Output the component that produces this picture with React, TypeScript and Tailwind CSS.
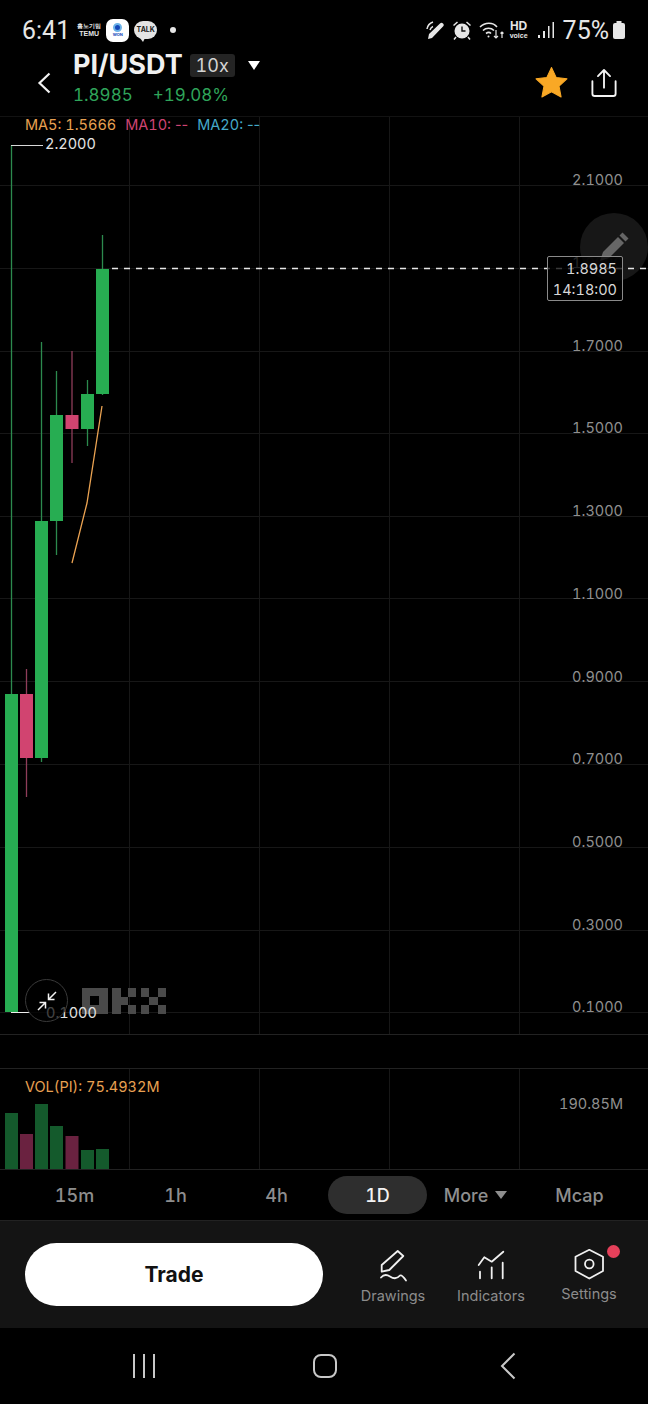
const FONT = "font-['Inter','Liberation_Sans',sans-serif] tabular-nums";

const verticals = [129, 259, 389, 519];
const horizontals = [185, 268, 351, 433, 516, 598, 681, 764, 847, 930, 1012];

const candles = [
  { x: 5, top: 694, bottom: 1012, wickTop: 145, wickBottom: 1012, up: true },
  { x: 20, top: 694, bottom: 758, wickTop: 669, wickBottom: 797, up: false },
  { x: 35, top: 521, bottom: 758, wickTop: 342, wickBottom: 762, up: true },
  { x: 50, top: 415, bottom: 521, wickTop: 371, wickBottom: 555, up: true },
  { x: 65.5, top: 415, bottom: 429, wickTop: 351, wickBottom: 463, up: false },
  { x: 81, top: 394, bottom: 429, wickTop: 380, wickBottom: 446, up: true },
  { x: 96, top: 269, bottom: 394, wickTop: 235, wickBottom: 395, up: true },
];

const volumes = [
  { x: 5, top: 1113, up: true },
  { x: 20, top: 1134, up: false },
  { x: 35, top: 1104, up: true },
  { x: 50, top: 1126, up: true },
  { x: 65.5, top: 1136, up: false },
  { x: 81, top: 1150, up: true },
  { x: 96, top: 1149, up: true },
];

const priceLabels = [
  { label: '2.1000', y: 180 },
  { label: '1.9000', y: 263 },
  { label: '1.7000', y: 346 },
  { label: '1.5000', y: 428 },
  { label: '1.3000', y: 511 },
  { label: '1.1000', y: 594 },
  { label: '0.9000', y: 677 },
  { label: '0.7000', y: 759 },
  { label: '0.5000', y: 842 },
  { label: '0.3000', y: 925 },
  { label: '0.1000', y: 1007 },
];

// chart pane, coordinates follow the page so they are easy to read off the picture
function PriceChart() {
  return (
    <div className="relative h-[919px] border-b border-[#222222]">
      <svg viewBox="0 116 648 918" className="absolute left-0 top-0 h-[918px] w-[648px]">
        {verticals.map((x) => (
          <line key={x} x1={x + 0.5} x2={x + 0.5} y1={116} y2={1034} stroke="#171717" />
        ))}
        {horizontals.map((y) => (
          <line key={y} x1={0} x2={648} y1={y + 0.5} y2={y + 0.5} stroke="#171717" />
        ))}
        <line x1={0} x2={648} y1={116.5} y2={116.5} stroke="#121212" />
        {candles.map((c) => (
          <g key={c.x}>
            <line
              x1={c.x + 6.5}
              x2={c.x + 6.5}
              y1={c.wickTop}
              y2={c.wickBottom}
              stroke={c.up ? '#2c8a4e' : '#8f3d5a'}
              strokeWidth={1.3}
            />
            <rect
              x={c.x}
              y={c.top}
              width={13}
              height={c.bottom - c.top}
              fill={c.up ? '#27ad52' : '#d14470'}
            />
          </g>
        ))}
        <polyline points="72,563 87,503 102,406" fill="none" stroke="#eba352" strokeWidth={1.3} />
        <line x1={11} x2={43} y1={145.5} y2={145.5} stroke="#d8d8d8" />
        <line x1={11} x2={30} y1={1012.5} y2={1012.5} stroke="#eeeeee" />
        {/* OKX watermark */}
        <g fill="#4a4a4a">
          <path d="M82 988h26v26h-26z M90 996v9h9v-9z" fillRule="evenodd" />
          <path d="M112 988h9v9h-9z M112 997h9v8h-9z M112 1005h9v9h-9z M121 997h7v8h-7z M128 988h8v9h-8z M128 1005h8v9h-8z" />
          <path d="M141 988h8v9h-8z M141 1005h8v9h-8z M149 997h9v8h-9z M158 988h8v9h-8z M158 1005h8v9h-8z" />
        </g>
      </svg>

      <div className="absolute left-[25px] top-0 flex gap-[9px] text-[14.500px] leading-[17px]">
        <span className="text-[#e8a052]">MA5: 1.5666</span>
        <span className="text-[#cf4472]">MA10: <span className="normal-nums">--</span></span>
        <span className="text-[#45a9c9]">MA20: <span className="normal-nums">--</span></span>
      </div>
      <span className="absolute left-[45px] top-[19px] text-[14.500px] leading-[18px] text-[#e4e4e4]">2.2000</span>
      <span className="absolute left-[46px] top-[888px] text-[14.500px] leading-[18px] text-[#e0e0e0]">0.1000</span>

      {priceLabels.map((p) => (
        <span
          key={p.label}
          className="absolute right-[25px] text-[14.500px] leading-[18px] text-[#8f8f8f]"
          style={{ top: p.y - 125 }}
        >
          {p.label}
        </span>
      ))}

      {/* floating draw button under the price tag */}
      <div className="absolute left-[580px] top-[97px] flex h-[68px] w-[68px] items-center justify-center rounded-full bg-[#1a1a1a]/90">
        <svg viewBox="0 0 40 40" className="ml-[4px] h-10 w-10" fill="#666666">
          <path d="M4 34l3-9 15-15 6 6-15 15z" />
          <path d="M23.500 8.500l3-3 6 6-3 3z" />
        </svg>
      </div>

      <svg viewBox="112 260 536 16" className="absolute left-[112px] top-[144px] h-[16px] w-[536px]">
        <line x1={112} x2={648} y1={268.5} y2={268.5} stroke="#e6e6e6" strokeWidth={1.4} strokeDasharray="6 6" />
      </svg>

      <div className="absolute left-[547px] top-[140px] flex h-[45px] w-[76px] flex-col items-end justify-center rounded-[2px] border border-[#8a8a8a] bg-black/75 pr-[5px] text-[14.500px] leading-[21px] text-[#d8d8d8]">
        <span>1.8985</span>
        <span>14:18:00</span>
      </div>

      {/* collapse button */}
      <div className="absolute left-[25px] top-[863px] flex h-[43px] w-[43px] items-center justify-center rounded-full border border-[#3a3a3a] bg-black/70">
        <svg viewBox="0 0 24 24" className="h-[24px] w-[24px]" fill="none" stroke="#f2f2f2" strokeWidth={1.5}>
          <path d="M21 3l-7.500 7.500M13.500 4.500v6h6" />
          <path d="M3 21l7.500-7.500M4.500 13.500h6v6" />
        </svg>
      </div>
    </div>
  );
}

function VolumeChart() {
  return (
    <div className="relative h-[102px] border-y border-[#222222]">
      <svg viewBox="0 1069 648 100" className="absolute left-0 top-0 h-[100px] w-[648px]">
        {verticals.map((x) => (
          <line key={x} x1={x + 0.5} x2={x + 0.5} y1={1069} y2={1169} stroke="#171717" />
        ))}
        {volumes.map((v) => (
          <rect
            key={v.x}
            x={v.x}
            y={v.top}
            width={13}
            height={1169 - v.top}
            fill={v.up ? '#145a2c' : '#6a2240'}
          />
        ))}
      </svg>
      <span className="absolute left-[25px] top-[9px] text-[14.500px] leading-[18px] text-[#e8a052]">VOL(PI): 75.4932M</span>
      <span className="absolute right-[25px] top-[26px] text-[14.500px] leading-[18px] text-[#8f8f8f]">190.85M</span>
    </div>
  );
}

function StatusBar() {
  return (
    <div className="flex h-[47px] items-center justify-between pl-[22px] pr-[22px] pt-[13px] text-[#e6e6e6]">
      <div className="flex items-center">
        <span className="font-['Roboto',sans-serif] text-[25px] leading-none">6:41</span>
        <div className="ml-[7px] flex w-[24px] flex-col items-center font-['Liberation_Sans',sans-serif] text-[7px] font-bold leading-[7px]">
          <span className="text-[6px]">홈노기밈</span>
          <span>TEMU</span>
        </div>
        <div className="ml-[5px] flex h-[23px] w-[23px] flex-col items-center justify-center rounded-[7px] bg-white">
          <span className="h-[9px] w-[9px] rounded-full border-2 border-[#6db3e8] bg-[#1447b8]" />
          <span className="text-[4px] font-bold leading-[6px] text-[#1447b8]">WON</span>
        </div>
        <div className="relative ml-[5px] flex h-[18px] w-[23px] items-center justify-center rounded-full bg-[#e4e4e4] text-[7px] font-bold text-[#222]">
          TALK
          <span className="absolute bottom-[-3px] left-[6px] h-0 w-0 border-l-[3px] border-r-[2px] border-t-[4px] border-x-transparent border-t-[#e4e4e4]" />
        </div>
        <span className="ml-[13px] h-[6px] w-[6px] rounded-full bg-[#e6e6e6]" />
      </div>
      <div className="flex items-center">
        <svg viewBox="0 0 20 20" className="h-[20px] w-[20px]" fill="none" stroke="#e6e6e6" strokeWidth={1.5}>
          <path d="M2 19l1-5L14 3.500c1-1 2-1 3 0s1 2 0 3L6 18z" fill="#e6e6e6" stroke="none" />
          <path d="M1 9c.5-3 3-6 6-7M4 10c.5-1.500 1.500-3 3-3.500" />
        </svg>
        <svg viewBox="0 0 20 20" className="ml-[6px] h-[20px] w-[20px]" fill="#e6e6e6">
          <circle cx="10" cy="11" r="7.500" />
          <path d="M1 5l4-3.500 1 1-4 3.500zM19 5l-4-3.500-1 1 4 3.500z" />
          <path d="M4 17l-2 2.500M16 17l2 2.500" stroke="#e6e6e6" strokeWidth="1.500" />
          <path d="M10 6.500V11h3.500" fill="none" stroke="#111" strokeWidth="1.400" />
        </svg>
        <svg viewBox="0 0 26 20" className="ml-[7px] h-[20px] w-[26px]" fill="none" stroke="#e6e6e6" strokeWidth={1.6}>
          <path d="M1 7c5-5 13-5 17 0M4 10.500c3-3 8-3 11 0M7 13.500c2-1.500 3.500-1.500 5 0" />
          <circle cx="9.500" cy="16.500" r="1" fill="#e6e6e6" stroke="none" />
          <path d="M17 10v8M15 16l2 2 2-2M23 18v-6M21.500 13.500l1.500-1.500 1.500 1.500" strokeWidth={1.2} />
        </svg>
        <div className="ml-[4px] flex w-[20px] flex-col items-center font-['Liberation_Sans',sans-serif] font-bold">
          <span className="text-[12px] leading-[11px]">HD</span>
          <span className="text-[7px] leading-[7px]">voice</span>
        </div>
        <svg viewBox="0 0 18 20" className="ml-[8px] h-[20px] w-[18px]" fill="#e6e6e6">
          <path d="M1 15h2v3H1zM6 11h2v7H6zM11 6h1.500v12H11zM15.500 2H17v16h-1.500z" />
        </svg>
        <span className="ml-[8px] font-['Roboto',sans-serif] text-[25px] leading-none">75%</span>
        <svg viewBox="0 0 14 20" className="ml-[3px] h-[20px] w-[14px]" fill="#e6e6e6">
          <path d="M4.500 1h5v2h-5z" />
          <rect x="1" y="3" width="12" height="16" rx="2" />
        </svg>
      </div>
    </div>
  );
}

function Header() {
  return (
    <div className="relative flex h-[69px] items-start">
      <svg viewBox="0 0 14 22" className="ml-[37px] mt-[25px] h-[22px] w-[14px]" fill="none" stroke="#f2f2f2" strokeWidth={2.2}>
        <path d="M12.500 1.500L2.500 11l10 9.500" />
      </svg>
      <div className="ml-[22px] flex flex-col">
        <div className="flex items-center">
          <span className="text-[27px] font-bold leading-[36px] text-[#f0f0f0]">PI/USDT</span>
          <span className="ml-[7px] flex h-[23px] w-[45px] items-center justify-center rounded-[3px] bg-[#242424] text-[18px] text-[#d4d4d4]">10x</span>
          <span className="ml-[13px] h-0 w-0 border-x-[6.500px] border-t-[9px] border-x-transparent border-t-white" />
        </div>
        <div className="flex gap-[20px] text-[17px] leading-[25px] text-[#2fa45a]">
          <span>1.8985</span>
          <span>+19.08%</span>
        </div>
      </div>
      <div className="ml-auto mr-[31px] mt-[19px] flex items-center gap-[23px]">
        <svg viewBox="0 0 32 32" className="h-[33px] w-[33px]" fill="#f9a825">
          <path d="M16 1.500l4.500 9.600 10.500 1.300-7.700 7.200 2 10.400-9.300-5.100-9.300 5.100 2-10.400L1 12.400l10.500-1.300z" stroke="#f9a825" strokeLinejoin="round" />
        </svg>
        <svg viewBox="0 0 28 32" className="h-[32px] w-[26px]" fill="none" stroke="#f4f4f4" strokeWidth={2} strokeLinecap="round" strokeLinejoin="round">
          <path d="M14 21V2M7.500 8.500L14 2l6.500 6.500" />
          <path d="M1.500 14v13.500a2.500 2.500 0 002.500 2.500h20a2.500 2.500 0 002.500-2.500V14" />
        </svg>
      </div>
    </div>
  );
}

function Timeframes() {
  return (
    <div className="grid h-[50px] grid-cols-6 items-center pl-[24px] pr-[18px] text-[18px] font-medium text-[#8e8e8e]">
      <span className="text-center">15m</span>
      <span className="text-center">1h</span>
      <span className="text-center">4h</span>
      <span className="mx-[1px] flex h-[38px] items-center justify-center rounded-full bg-[#2e2e2e] text-[#f2f2f2]">1D</span>
      <span className="flex items-center justify-center gap-[7px] pr-[6px]">
        More
        <span className="h-0 w-0 border-x-[6px] border-t-[8px] border-x-transparent border-t-[#8e8e8e]" />
      </span>
      <span className="text-center">Mcap</span>
    </div>
  );
}

function BottomBar() {
  return (
    <div className="flex h-[108px] items-center border-t border-[#222222] bg-[#141414] pl-[25px]">
      <button className="flex h-[63px] w-[298px] items-center justify-center rounded-full bg-white text-[21px] font-bold text-[#111111]">
        Trade
      </button>
      <div className="ml-[21px] grid h-[63px] w-[294px] grid-cols-3 items-start pt-[7px] text-[14.500px] text-[#8c8c8c]">
        <div className="flex flex-col items-center gap-[4px]">
          <svg viewBox="0 0 32 32" className="h-[32px] w-[32px]" fill="none" stroke="#f0f0f0" strokeWidth={1.8} strokeLinejoin="round" strokeLinecap="round">
            <path d="M4.700 15L20.700 1l5.600 5L12.300 20l-7.600 1.700z" />
            <path d="M4 27.500c3-3.500 6-3 9-1s7 2.500 10-1c2-1 4 2 6 5" />
          </svg>
          <span className="leading-[20px]">Drawings</span>
        </div>
        <div className="flex flex-col items-center gap-[4px]">
          <svg viewBox="0 0 32 32" className="h-[32px] w-[32px]" fill="none" stroke="#f0f0f0" strokeWidth={1.8} strokeLinecap="round" strokeLinejoin="round">
            <path d="M3.700 15l5.600-7.700 7.400 4.400L28.300 1.700" />
            <path d="M5 21.700v6.600M16.700 17.300v11M27.700 12.700v15.600" />
          </svg>
          <span className="leading-[20px]">Indicators</span>
        </div>
        <div className="relative -mt-[1px] flex flex-col items-center gap-[3px]">
          <svg viewBox="0 0 32 32" className="h-[32px] w-[32px]" fill="none" stroke="#f0f0f0" strokeWidth={1.8} strokeLinejoin="round">
            <path d="M16.300.800L30 7.700V22l-13.700 7.500L2.500 22V7.700z" />
            <circle cx="16.300" cy="15" r="4.300" />
          </svg>
          <span className="leading-[20px]">Settings</span>
          <span className="absolute left-[67px] top-[-4px] h-[13px] w-[13px] rounded-full bg-[#e5405a]" />
        </div>
      </div>
    </div>
  );
}

function NavBar() {
  return (
    <div className="flex h-[76px] items-center justify-between pb-[1px] pl-[132px] pr-[132px]">
      <svg viewBox="0 0 24 24" className="h-[24px] w-[24px]" fill="#c8c8c8">
        <path d="M1 0h2v24H1zM11 0h2v24h-2zM21 0h2v24h-2z" />
      </svg>
      <span className="mr-[6px] h-[24px] w-[24px] rounded-[8px] border-2 border-[#c8c8c8]" />
      <svg viewBox="0 0 16 28" className="h-[28px] w-[16px]" fill="none" stroke="#c8c8c8" strokeWidth={2}>
        <path d="M14.500 1.500L2 14l12.500 12.500" />
      </svg>
    </div>
  );
}

export default function App() {
  return (
    <div className={`flex h-[1404px] w-[648px] flex-col overflow-hidden bg-black ${FONT}`}>
      <StatusBar />
      <Header />
      <PriceChart />
      <div className="h-[33px]" />
      <VolumeChart />
      <Timeframes />
      <BottomBar />
      <NavBar />
    </div>
  );
}
